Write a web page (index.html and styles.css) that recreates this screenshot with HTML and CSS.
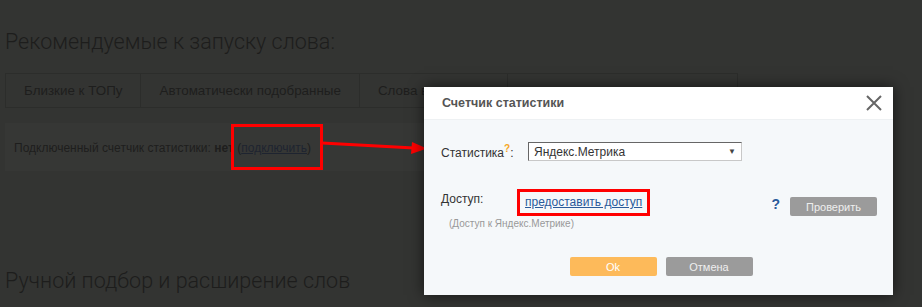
FILE: index.html
```html
<!DOCTYPE html>
<html lang="ru">
<head>
    <meta charset="UTF-8">
    <title>Счетчик статистики</title>
    <link rel="stylesheet" href="styles.css">
</head>
<body>
<div class="page">
    <h1 class="section-title">Рекомендуемые к запуску слова:</h1>
    <div class="tabs">
        <div class="tab">Близкие к ТОПу</div>
        <div class="tab">Автоматически подобранные</div>
        <div class="tab">Слова в позициях</div>
        <div class="tab"></div>
    </div>
    <div class="counter-panel">
        Подключенный счетчик статистики: <b>нет</b> (<a href="#" class="dark-link">подключить</a>)
    </div>
    <h2 class="section-title second">Ручной подбор и расширение слов</h2>
</div>

<!-- пометки поверх скриншота -->
<div class="mark mark-connect"></div>
<svg class="arrow" width="110" height="20" viewBox="0 0 110 20">
    <line x1="0" y1="6" x2="92" y2="11" stroke="#ff0000" stroke-width="3"/>
    <polygon points="90,5 105,11.5 89,17" fill="#ff0000"/>
</svg>

<div class="modal">
    <div class="modal-header">
        <span class="modal-title">Счетчик статистики</span>
        <svg class="close" width="16" height="16" viewBox="0 0 16 16">
            <path d="M1 1 L15 15 M15 1 L1 15" stroke="#666" stroke-width="2"/>
        </svg>
    </div>
    <div class="modal-body">
        <div class="row">
            <label class="label">Статистика<sup class="hint">?</sup>:</label>
            <div class="select">
                <span>Яндекс.Метрика</span>
                <span class="caret">&#9660;</span>
            </div>
        </div>
        <div class="row access">
            <span class="label">Доступ:</span>
            <a href="#" class="link">предоставить доступ</a>
            <span class="spacer"></span>
            <span class="help">?</span>
            <button class="btn btn-gray check">Проверить</button>
        </div>
        <div class="note">(Доступ к Яндекс.Метрике)</div>
        <div class="actions">
            <button class="btn btn-orange">Ok</button>
            <button class="btn btn-gray">Отмена</button>
        </div>
    </div>
    <div class="mark mark-access"></div>
</div>
</body>
</html>
```

FILE: styles.css
```css
body {
    margin: 0;
    background-color: #333432;
    font-family: 'Liberation Sans', Arial, sans-serif;
    width: 922px;
    height: 307px;
    overflow: hidden;
    position: relative;
}
.page {
    padding: 0 184px 0 5px;
}
.section-title {
    font-family: Roboto, sans-serif;
    font-weight: 300;
    font-size: 21.5px;
    color: #1d1d1c;
    margin: 0;
    padding-top: 28px;
    line-height: 28px;
}
.section-title.second {
    padding-top: 96px;
}
.tabs {
    display: flex;
    margin-top: 17px;
    height: 33px;
    border: 1px solid #2c2d2b;
}
.tab {
    padding: 0 18px;
    font-size: 13.4px;
    color: #1e1e1d;
    line-height: 33px;
    border-right: 1px solid #2c2d2b;
}
.tab:last-child {
    flex: 1;
    border-right: none;
}
.counter-panel {
    margin-top: 15px;
    height: 48px;
    background-color: #363735;
    font-size: 12px;
    color: #1e1e1d;
    line-height: 50px;
    padding-left: 9px;
}
.dark-link {
    color: #1e2430;
}
.mark {
    position: absolute;
    border: 3px solid #ff0000;
}
.mark-connect {
    left: 231px;
    top: 124px;
    width: 86px;
    height: 40px;
}
.arrow {
    position: absolute;
    left: 322px;
    top: 137px;
}
.modal {
    position: absolute;
    left: 424px;
    top: 87px;
    width: 469px;
    height: 208px;
    background-color: #f5f8fa;
    box-shadow: 0 0 14px rgba(0, 0, 0, 0.6);
}
.modal-header {
    height: 32px;
    background-color: #fff;
    display: flex;
    align-items: center;
    justify-content: space-between;
    padding: 0 11px 0 18px;
    border-bottom: 1px solid #eef1f3;
}
.modal-title {
    font-size: 12.5px;
    font-weight: bold;
    color: #555;
}
.modal-body {
    padding: 22px 16px 0 17px;
}
.row {
    display: flex;
    align-items: center;
    font-size: 12px;
    color: #333;
}
.label {
    width: 87px;
}
.hint {
    color: #f5a623;
    font-weight: bold;
    font-size: 10px;
}
.select {
    width: 202px;
    height: 15px;
    display: flex;
    justify-content: space-between;
    align-items: center;
    padding: 1px 5px;
    background-color: #fff;
    border: 1px solid #c8c8c8;
    border-top-color: #666;
    border-left-color: #666;
    font-size: 12px;
    color: #333;
}
.caret {
    font-size: 8px;
    color: #444;
}
.access {
    margin-top: 31px;
    align-items: flex-start;
}
.access .label {
    width: 84px;
}
.link {
    color: #2a5a9a;
    padding-top: 3px;
}
.spacer {
    flex: 1;
}
.help {
    color: #2a5a9a;
    font-weight: bold;
    font-size: 14px;
    margin-right: 10px;
    padding-top: 4px;
}
.btn {
    font-family: 'Liberation Sans', Arial, sans-serif;
    border: none;
    border-radius: 2px;
    color: #fff;
    font-size: 11px;
    width: 87px;
    height: 19px;
    padding: 0;
}
.btn-gray {
    background-color: #9b9b9b;
    color: #eee;
}
.btn-orange {
    background-color: #fdba5a;
}
.check {
    margin-top: 5px;
}
.note {
    font-size: 10px;
    color: #999;
    padding-left: 8px;
    margin-top: 2px;
}
.actions {
    display: flex;
    justify-content: center;
    gap: 9px;
    margin-top: 28px;
    padding-left: 4px;
}
.mark-access {
    left: 93px;
    top: 102px;
    width: 127px;
    height: 21px;
}
```
